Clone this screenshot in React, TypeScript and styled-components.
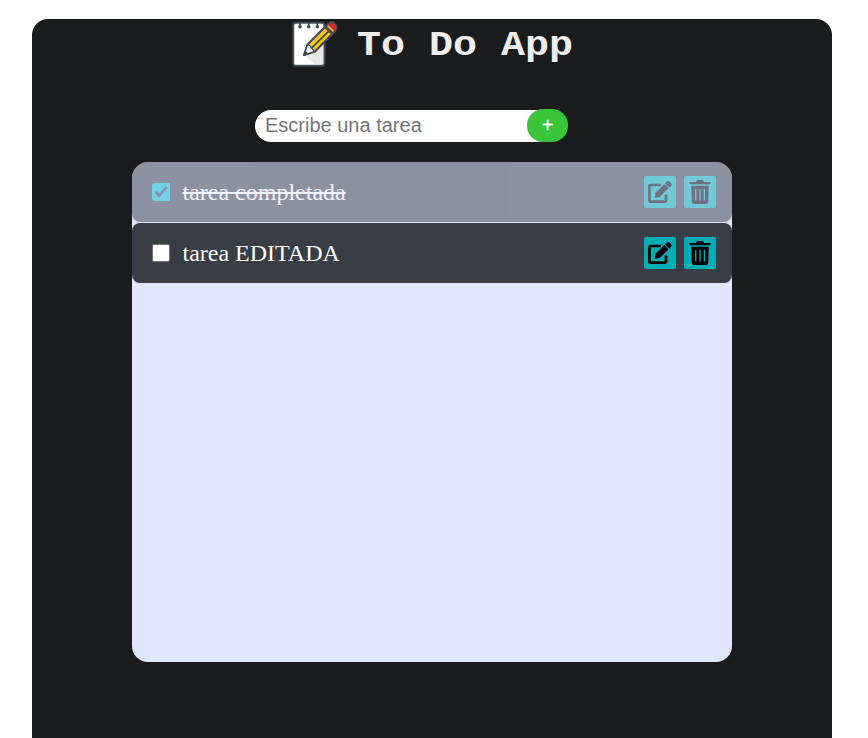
import React, { useState } from "react";
import styled, { createGlobalStyle } from "styled-components";

const GlobalStyle = createGlobalStyle`
  * { box-sizing: border-box; }
  html, body { margin: 0; background: #fff; overflow: hidden; }
  body { font-family: "Liberation Serif", "Times New Roman", serif; }
`;

const AppPanel = styled.main`
  display: flex;
  flex-direction: column;
  align-items: center;
  width: 800px;
  height: 719px;
  margin: 19px 0 0 32px;
  border-radius: 16px 16px 0 0;
  background: #191b1c;
`;

const Title = styled.h1`
  display: flex;
  width: 284px;
  height: 50px;
  margin: 0 0 41px;
  color: #eee;
  font: bold 40px/50px "Courier New", "Liberation Mono", monospace;
  white-space: pre;
`;

const TitleText = styled.span`
  transform: translateY(1px) scaleY(0.88);
  transform-origin: 0 36px;
`;

const Notepad = styled.svg`
  width: 50px;
  height: 50px;
  margin-right: 17px;
  flex: none;
`;

const TaskForm = styled.form`
  display: flex;
  align-items: flex-start;
  width: 313px;
  height: 32px;
  margin: 0 41px 20px 0;
`;

const TaskInput = styled.input`
  width: 300px;
  height: 32px;
  padding: 0 10px 2px;
  border: 0;
  border-radius: 16px;
  outline: 0;
  background: #fff;
  font: 20px "Liberation Sans", Arial, sans-serif;
  &::placeholder { color: #757575; }
`;

const AddButton = styled.button`
  width: 41px;
  height: 33px;
  margin: -1px 0 0 -28px;
  padding: 0;
  border: 0;
  border-radius: 16px;
  background: #3ac43a;
  color: #fff;
  font: 20px/33px "Liberation Sans", Arial, sans-serif;
  -webkit-text-stroke: 0.3px #fff;
`;

const TaskList = styled.ul`
  display: flex;
  flex-direction: column;
  gap: 1px;
  width: 600px;
  height: 500px;
  margin: 0;
  padding: 0;
  overflow: hidden;
  border-radius: 16px;
  background: #e1e6ff;
  list-style: none;
`;

const TaskRow = styled.li<{ $done: boolean }>`
  display: flex;
  align-items: center;
  height: 60px;
  padding: 0 16px 0 20px;
  border-radius: 8px;
  background: #393e46;
  color: #fff;
  opacity: ${({ $done }) => ($done ? 0.5 : 1)};
`;

const Check = styled.button<{ $done: boolean }>`
  display: flex;
  width: 18px;
  height: 18px;
  padding: 0;
  border: ${({ $done }) => ($done ? "0" : "1px solid #767676")};
  border-radius: 2px;
  background: ${({ $done }) => ($done ? "#00bcd4" : "#fff")};
`;

const CheckMark = styled.svg`
  width: 18px;
  height: 18px;
`;

const TaskText = styled.span<{ $done: boolean }>`
  flex: 1;
  margin-left: 12.5px;
  font-size: 24px;
  line-height: 28px;
  text-decoration: ${({ $done }) => ($done ? "line-through" : "none")};
`;

const Actions = styled.div`
  display: flex;
  gap: 8px;
`;

const IconButton = styled.button`
  display: flex;
  align-items: center;
  justify-content: center;
  width: 32px;
  height: 32px;
  padding: 0;
  border: 0;
  border-radius: 2px;
  background: #00adb5;
  color: #000;
`;

const ActionIcon = styled.svg`
  width: 24px;
  height: 24px;
`;

function NotepadIcon() {
  return (
    <Notepad viewBox="0 0 50 50" aria-hidden="true">
      <rect x="3.2" y="3.7" width="31.3" height="43" rx="2.5" fill="#fff" stroke="#414b50" strokeWidth="2" />
      <path d="M15 36 L33 21 V45 H24Z" fill="#e9e9e9" />
      <path d="M10 3v5M18.7 3v5M27.3 3v5" stroke="#414b50" strokeWidth="1.6" />
      <g fill="#414b50"><circle cx="10" cy="7.8" r="1.8" /><circle cx="18.7" cy="7.8" r="1.8" /><circle cx="27.3" cy="7.8" r="1.8" /></g>
      <path d="M14 36 L17.5 25.5 L38.5 4.5 Q41 2 43.6 4 L45.6 6 Q47.5 8.5 45.6 11.5 L25 32.5Z" fill="#fdc51f" stroke="#414b50" strokeWidth="2.2" strokeLinejoin="round" />
      <path d="M21 29.6 L40 10.8" stroke="#3c4549" strokeWidth="1.7" />
      <path d="M14 36 L17.5 25.8 L20 26.7 L21.5 29.3 L24.6 32.2Z" fill="#eee" stroke="#414b50" strokeWidth="1.2" />
      <path d="M13.7 36.3l1.6-4.8 3.2 3.2z" fill="#414b50" />
      <path d="M36.2 6.3l8 8-2.2 2.2-8-8z" fill="#465057" />
      <path d="M38.5 5.5q3-3 5.5-1l1.7 1.7q2 2.5-.7 5.2l-.7.7-6.4-6z" fill="#cf292e" />
    </Notepad>
  );
}

function EditIcon() {
  return (
    <ActionIcon viewBox="0 0 24 24" aria-hidden="true">
      <path d="M12.8 5H2.8Q1.4 5 1.4 6.4V20.2Q1.4 21.6 2.8 21.6H16.6Q18 21.6 18 20.2V14.5" fill="none" stroke="currentColor" strokeWidth="2.7" />
      <path d="M16.3 4.1 20.5 8.3 11.6 17.1 6.6 17.9 7.4 13ZM17 3.4 18.9 1.6Q20.2.5 21.5 1.6L23.2 3.4Q24.3 4.6 23.2 5.8L21.2 7.6Z" fill="currentColor" />
    </ActionIcon>
  );
}

function TrashIcon() {
  return (
    <ActionIcon viewBox="0 0 24 24" aria-hidden="true">
      <path d="M8 2 8.6.7Q8.9 0 9.8 0H14.2Q15.1 0 15.4.7L16 2H22.5V4.2H1.5V2Z" fill="currentColor" />
      <path fillRule="evenodd" d="M3.3 5.7H20.7L20.2 22Q20 24 18 24H6Q4 24 3.8 22ZM7.1 9V20.6H8.4V9ZM11.4 9V20.6H12.7V9ZM15.7 9V20.6H17V9Z" fill="currentColor" />
    </ActionIcon>
  );
}

const initialTasks = [
  { id: 1, text: "tarea completada", done: true },
  { id: 2, text: "tarea EDITADA", done: false },
];

export default function App() {
  const [tasks, setTasks] = useState(initialTasks);
  const [draft, setDraft] = useState("");

  const addTask = (event: React.FormEvent) => {
    event.preventDefault();
    if (!draft.trim()) return;
    setTasks([...tasks, { id: Date.now(), text: draft.trim(), done: false }]);
    setDraft("");
  };
  const toggle = (id: number) =>
    setTasks(tasks.map((task) => (task.id === id ? { ...task, done: !task.done } : task)));

  return (
    <>
      <GlobalStyle />
      <AppPanel>
        <Title><NotepadIcon /><TitleText>To Do App</TitleText></Title>
        <TaskForm onSubmit={addTask}>
          <TaskInput placeholder="Escribe una tarea" value={draft} onChange={(e) => setDraft(e.target.value)} />
          <AddButton type="submit">+</AddButton>
        </TaskForm>
        <TaskList>
          {tasks.map((task) => (
            <TaskRow key={task.id} $done={task.done}>
              <Check type="button" role="checkbox" aria-checked={task.done} $done={task.done} onClick={() => toggle(task.id)}>
                {task.done && (
                  <CheckMark viewBox="0 0 18 18">
                    <path d="M3.7 8.9 7.2 12.8 14.6 3.8" fill="none" stroke="#393e46" strokeWidth="2.7" />
                  </CheckMark>
                )}
              </Check>
              <TaskText $done={task.done}>{task.text}</TaskText>
              <Actions>
                <IconButton aria-label="Editar"><EditIcon /></IconButton>
                <IconButton aria-label="Eliminar" onClick={() => setTasks(tasks.filter((t) => t.id !== task.id))}><TrashIcon /></IconButton>
              </Actions>
            </TaskRow>
          ))}
        </TaskList>
      </AppPanel>
    </>
  );
}
